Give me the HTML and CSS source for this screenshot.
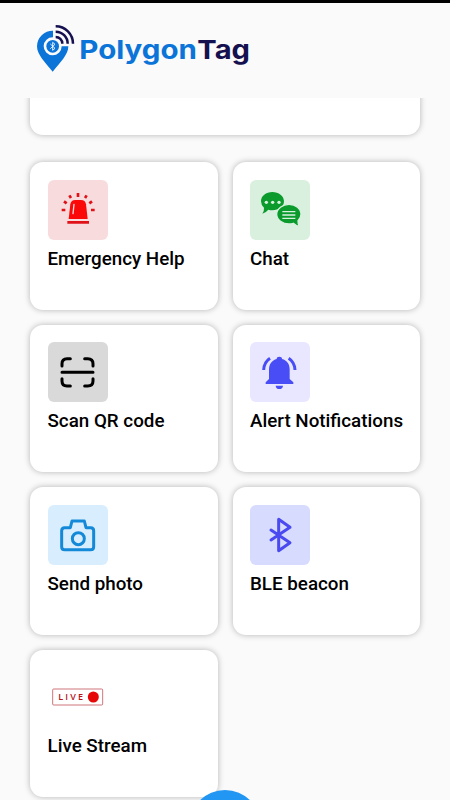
FILE: index.html
```html
<!DOCTYPE html>
<html lang="en">
<head>
<meta charset="utf-8">
<title>PolygonTag</title>
<link rel="stylesheet" href="styles.css">
</head>
<body>
<div class="status"></div>
<header class="header">
  <svg class="logo" viewBox="0 0 720 240" role="img" aria-label="PolygonTag">
    <path fill="#0b74d8" d="M99 92A47 47 0 0 0 51 139C51 165 76 187 98 215C120 187 145 165 145 139H125A27 27 0 1 1 99 112Z"/>
    <circle cx="98" cy="139" r="19" fill="#0b74d8"/>
    <path d="M91 132l14 13-7 6v-24l7 6-14 13" fill="none" stroke="#fff" stroke-width="2.6"/>
    <path d="M107 79A52 52 0 0 1 159 131M107 95A36 36 0 0 1 143 131M107 111A20 20 0 0 1 127 131" fill="none" stroke="#15104f" stroke-width="7.5"/>
    <text class="brand blue" x="178" y="177" textLength="353" lengthAdjust="spacingAndGlyphs">Polygon</text>
    <text class="brand navy" x="532" y="177" textLength="158" lengthAdjust="spacingAndGlyphs">Tag</text>
  </svg>
</header>
<main class="content">
  <div class="banner"></div>
  <div class="grid">
    <section class="card">
      <svg class="icon red" viewBox="0 0 180 180">
        <path fill="#fb0808" d="M62 117L67 73Q69 60 82 60H99Q112 60 114 73L119 117Z"/>
        <path d="M78 73L75 101" stroke="#f8dcdd" stroke-width="4" stroke-linecap="round"/>
        <path d="M58 127H123" stroke="#e01218" stroke-width="8"/>
        <path d="M90 39V51M64 46L69 54M116 46L111 54M48 64L56 70M132 64L124 70M41 90H52M129 90H140" stroke="#e01218" stroke-width="8"/>
      </svg>
      <h2>Emergency Help</h2>
    </section>
    <section class="card">
      <svg class="icon green" viewBox="0 0 180 180">
        <path fill="#0a9b2c" d="M67 36C86 36 102 48 102 64S86 91 67 91Q61 91 55 89Q48 98 37 101Q43 92 42 83Q33 75 33 64C33 48 48 36 67 36Z"/>
        <path fill="#0a9b2c" stroke="#daf0df" stroke-width="4" d="M117 73C98 73 80 86 80 103S98 132 117 132Q125 132 130 130Q138 138 149 140Q143 133 144 122Q153 114 153 103C153 86 137 73 117 73Z"/>
        <g fill="#daf0df"><circle cx="49" cy="67" r="5"/><circle cx="68" cy="67" r="5"/><circle cx="87" cy="67" r="5"/></g>
        <path d="M97 95H136M97 105H136M97 115H136" stroke="#daf0df" stroke-width="4"/>
      </svg>
      <h2>Chat</h2>
    </section>
    <section class="card">
      <svg class="icon gray" viewBox="0 0 180 180">
        <path d="M42 72V65Q42 50 57 50H67M110 50H119Q135 50 135 65V72M42 110V117Q42 132 57 132H67M110 132H119Q135 132 135 117V110M42 91H135" fill="none" stroke="#000" stroke-width="9" stroke-linecap="round"/>
      </svg>
      <h2>Scan QR code</h2>
    </section>
    <section class="card">
      <svg class="icon violet" viewBox="0 0 180 180">
        <path fill="#484df5" d="M47 126V121L57 111V82C57 66 66 55 80 51Q80 44 88 44T96 51C111 55 119 66 119 82V111L130 121V126ZM77 131H99Q98 141 88 141T77 131Z"/>
        <path d="M41 84Q42 61 60 49M135 84Q134 61 116 49" fill="none" stroke="#484df5" stroke-width="9"/>
      </svg>
      <h2>Alert Notifications</h2>
    </section>
    <section class="card">
      <svg class="icon sky" viewBox="0 0 180 180">
        <g fill="none" stroke="#1489d8" stroke-width="9" stroke-linejoin="round"><path d="M67 68L72 48H109L114 68H128Q137 68 137 77V125Q137 134 128 134H50Q41 134 41 125V77Q41 68 50 68Z"/><circle cx="91" cy="101" r="18"/></g>
      </svg>
      <h2>Send photo</h2>
    </section>
    <section class="card">
      <svg class="icon indigo" viewBox="0 0 180 180">
        <path d="M63 75L120 113L86 137V43L120 67L63 105" fill="none" stroke="#4b4af0" stroke-width="9" stroke-linecap="round" stroke-linejoin="round"/>
      </svg>
      <h2>BLE beacon</h2>
    </section>
    <section class="card">
      <svg class="icon" viewBox="0 0 180 180">
        <rect x="14" y="66" width="150" height="48" rx="3" fill="#fff" stroke="#c55a60" stroke-width="2.5"/>
        <text class="live" x="31" y="99" textLength="74">LIVE</text>
        <circle cx="136" cy="90" r="16.5" fill="#e60808"/>
      </svg>
      <h2>Live Stream</h2>
    </section>
  </div>
</main>
<div class="fab"></div>
</body>
</html>
```

FILE: styles.css
```css
* { box-sizing: border-box; }
body {
  margin: 0;
  height: 800px;
  overflow: hidden;
  display: flex;
  flex-direction: column;
  background: #fafafa;
  color: #000;
  font-family: Roboto, sans-serif;
}
.status { height: 2.5px; flex: none; background: #000; }
.header { height: 95px; flex: none; padding-left: 20px; }
.logo { display: block; width: 240px; height: 80px; margin-top: -2.5px; overflow: visible; }
.brand { font: 700 78px Inter, sans-serif; }
.blue { fill: #0b74d8; }
.navy { fill: #15104f; }
.content { flex: 1; min-height: 0; overflow: hidden; padding: 0 30px; }
.banner, .card {
  background: #fff;
  border-radius: 13px;
  box-shadow: 0 0 6px rgba(0, 0, 0, .28);
}
.banner { height: 60px; margin-top: -22.5px; margin-bottom: 27px; }
.grid { display: grid; grid-template-columns: repeat(2, minmax(0, 1fr)); gap: 15px; }
.card { height: 147.5px; padding: 17.5px; }
.icon { display: block; width: 60px; height: 60px; border-radius: 6px; }
.red { background: #f8dcdd; }
.green { background: #daf0df; }
.gray { background: #d9d9d9; }
.violet { background: #e9e7ff; }
.sky { background: #d8eeff; }
.indigo { background: #d7dcff; }
.card h2 {
  margin: 8px 0 0;
  font-size: 18.8px;
  line-height: 22px;
  font-weight: 500;
  white-space: nowrap;
}
.live { font: 600 27px "Open Sans", sans-serif; fill: #b5121b; }
.fab {
  position: fixed;
  left: 189px;
  top: 790px;
  width: 72px;
  height: 72px;
  border-radius: 50%;
  background: #2196f3;
}
```
